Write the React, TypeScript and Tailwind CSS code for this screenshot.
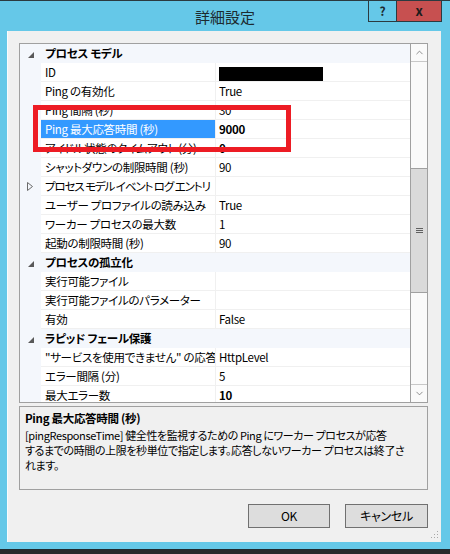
import { ChevronUp, ChevronDown } from 'lucide-react';

type Row =
  | { kind: 'cat'; label: string }
  | {
      kind: 'prop';
      label: string;
      value?: string;
      bold?: boolean;
      selected?: boolean;
      redacted?: boolean;
      expander?: boolean;
      tight?: boolean;
    };

const rows: Row[] = [
  { kind: 'cat', label: 'プロセス モデル' },
  { kind: 'prop', label: 'ID', redacted: true },
  { kind: 'prop', label: 'Ping の有効化', value: 'True' },
  { kind: 'prop', label: 'Ping 間隔 (秒)', value: '30' },
  { kind: 'prop', label: 'Ping 最大応答時間 (秒)', value: '9000', bold: true, selected: true },
  { kind: 'prop', label: 'アイドル状態のタイムアウト (分)', value: '0', bold: true },
  { kind: 'prop', label: 'シャットダウンの制限時間 (秒)', value: '90' },
  { kind: 'prop', label: 'プロセス モデル イベント ログ エントリ', expander: true, tight: true },
  { kind: 'prop', label: 'ユーザー プロファイルの読み込み', value: 'True' },
  { kind: 'prop', label: 'ワーカー プロセスの最大数', value: '1' },
  { kind: 'prop', label: '起動の制限時間 (秒)', value: '90' },
  { kind: 'cat', label: 'プロセスの孤立化' },
  { kind: 'prop', label: '実行可能ファイル', value: '' },
  { kind: 'prop', label: '実行可能ファイルのパラメーター', value: '' },
  { kind: 'prop', label: '有効', value: 'False' },
  { kind: 'cat', label: 'ラピッド フェール保護' },
  { kind: 'prop', label: '"サービスを使用できません" の応答の種類', value: 'HttpLevel' },
  { kind: 'prop', label: 'エラー間隔 (分)', value: '5' },
  { kind: 'prop', label: '最大エラー数', value: '10', bold: true },
];

function CollapseIcon() {
  return (
    <svg width="6" height="6" viewBox="0 0 6 6">
      <polygon points="6,0 6,6 0,6" fill="#595959" />
    </svg>
  );
}

function ExpandIcon() {
  return (
    <svg width="6" height="9" viewBox="0 0 6 9">
      <polygon points="0.5,0.5 5.5,4.5 0.5,8.5" fill="none" stroke="#6b6b6b" strokeWidth="1" />
    </svg>
  );
}

function GridRow({ row }: { row: Row }) {
  if (row.kind === 'cat') {
    return (
      <div className="flex h-[19px] items-center bg-[#f4f7fc]">
        <div className="flex w-[21px] shrink-0 items-center justify-end pr-[7px] pt-[2px]">
          <CollapseIcon />
        </div>
        <div className="pl-[4px] font-bold leading-[19px] whitespace-nowrap">{row.label}</div>
      </div>
    );
  }
  return (
    <div className="flex h-[19px]">
      <div className="flex w-[21px] shrink-0 items-center justify-end bg-[#f4f7fc] pr-[8px]">
        {row.expander && <ExpandIcon />}
      </div>
      <div
        className={
          'w-[175px] shrink-0 overflow-hidden whitespace-nowrap border-r border-b border-[#f0f0f0] pl-[4px] leading-[18px] ' +
          (row.selected ? 'bg-[#3399ff] text-white ' : 'bg-white ') +
          (row.tight ? 'tracking-[-1.1px]' : '')
        }
      >
        {row.label}
      </div>
      <div
        className={
          'flex-1 overflow-hidden whitespace-nowrap border-b border-[#f0f0f0] bg-white pl-[3px] leading-[18px] ' +
          (row.bold ? 'font-bold' : '')
        }
      >
        {row.redacted ? <div className="mt-[4px] h-[14px] w-[104px] bg-black" /> : row.value}
      </div>
    </div>
  );
}

function ScrollBar() {
  return (
    <div className="flex w-[17px] shrink-0 flex-col border-l border-[#a0a0a0] bg-[#fafafa]">
      <div className="flex h-[18px] items-center justify-center border-b border-[#c8c8c8] text-[#606060]">
        <ChevronUp size={11} strokeWidth={1.5} />
      </div>
      <div className="h-[106px]" />
      <div className="flex h-[125px] items-center justify-center border-y border-[#a0a0a0] bg-[#dadada]">
        <div className="flex flex-col gap-[1px]">
          <div className="h-[1px] w-[7px] bg-[#606060]" />
          <div className="h-[1px] w-[7px] bg-[#606060]" />
          <div className="h-[1px] w-[7px] bg-[#606060]" />
        </div>
      </div>
      <div className="flex-1" />
      <div className="flex h-[18px] items-center justify-center border-t border-[#c8c8c8] text-[#606060]">
        <ChevronDown size={11} strokeWidth={1.5} />
      </div>
    </div>
  );
}

export default function App() {
  return (
    <div
      className="relative flex h-[554px] w-[450px] flex-col overflow-hidden bg-[#65c8e8] text-[11.5px] tracking-[-0.3px] text-black [font-feature-settings:'palt']"
      style={{ fontFamily: '"Noto Sans CJK JP", "Noto Sans", sans-serif' }}
    >
      {/* title bar */}
      <div className="relative flex h-[31px] shrink-0 items-center justify-center border-t border-[#2b3a40]">
        <span className="text-[15px] leading-none tracking-normal text-[#1c2a30]">詳細設定</span>
        <div className="absolute top-0 right-[8px] flex">
          <div className="flex h-[21px] w-[29px] items-center justify-center border border-t-0 border-[#2b3a40] text-[12px] font-bold text-[#1c2a30]">
            ?
          </div>
          <div className="flex h-[21px] w-[45px] items-center justify-center border border-t-0 border-l-0 border-[#2b3a40] bg-[#c75050] text-[13px] font-bold text-[#1c1c1c]">
            x
          </div>
        </div>
      </div>

      {/* client area */}
      <div className="ml-[7px] flex h-[511px] w-[434px] shrink-0 flex-col border-l border-[#f8fcfe] bg-[#f0f0f0] pt-[12px] pl-[11px]">
        <div className="flex h-[360px] w-[409px] overflow-hidden border border-[#a0a0a0] bg-white">
          <div className="flex-1 overflow-hidden">
            {rows.map((row, i) => (
              <GridRow key={i} row={row} />
            ))}
          </div>
          <ScrollBar />
        </div>

        <div className="mt-[3px] h-[84px] w-[409px] overflow-hidden border border-[#a0a0a0] bg-[#f0f0f0] px-[5px] pt-[2px]">
          <div className="font-bold leading-[18px] whitespace-nowrap">Ping 最大応答時間 (秒)</div>
          <div className="mt-[1px] text-[11px] leading-[15px] whitespace-nowrap tracking-[-0.4px]">
            <div>[pingResponseTime] 健全性を監視するための Ping にワーカー プロセスが応答</div>
            <div>するまでの時間の上限を秒単位で指定します。応答しないワーカー プロセスは終了さ</div>
            <div>れます。</div>
          </div>
        </div>

        <div className="mt-[14px] flex w-[409px] justify-end gap-[15px]">
          <button className="h-[24px] w-[82px] border border-[#707070] bg-[#dddddd] text-[12px] leading-none">
            OK
          </button>
          <button className="h-[24px] w-[83px] border border-[#707070] bg-[#dddddd] text-[12px] leading-none">
            キャンセル
          </button>
        </div>

        <div className="mt-auto mb-[3px] mr-[2px] flex justify-end">
          <svg width="8" height="8" viewBox="0 0 8 8">
            <rect x="6" y="0" width="1" height="1" fill="#a8a8a8" />
            <rect x="3" y="3" width="1" height="1" fill="#a8a8a8" />
            <rect x="6" y="3" width="1" height="1" fill="#a8a8a8" />
            <rect x="0" y="6" width="1" height="1" fill="#a8a8a8" />
            <rect x="3" y="6" width="1" height="1" fill="#a8a8a8" />
            <rect x="6" y="6" width="1" height="1" fill="#a8a8a8" />
          </svg>
        </div>
      </div>

      <div className="h-[7px] shrink-0" />
      <div className="flex-1 border-t border-[#1e2a30] bg-[#2a2a2a]" />

      {/* red annotation box */}
      <div className="pointer-events-none absolute top-[105px] left-[33px] h-[47px] w-[258px] border-[5px] border-[#ed1c24]" />
    </div>
  );
}
